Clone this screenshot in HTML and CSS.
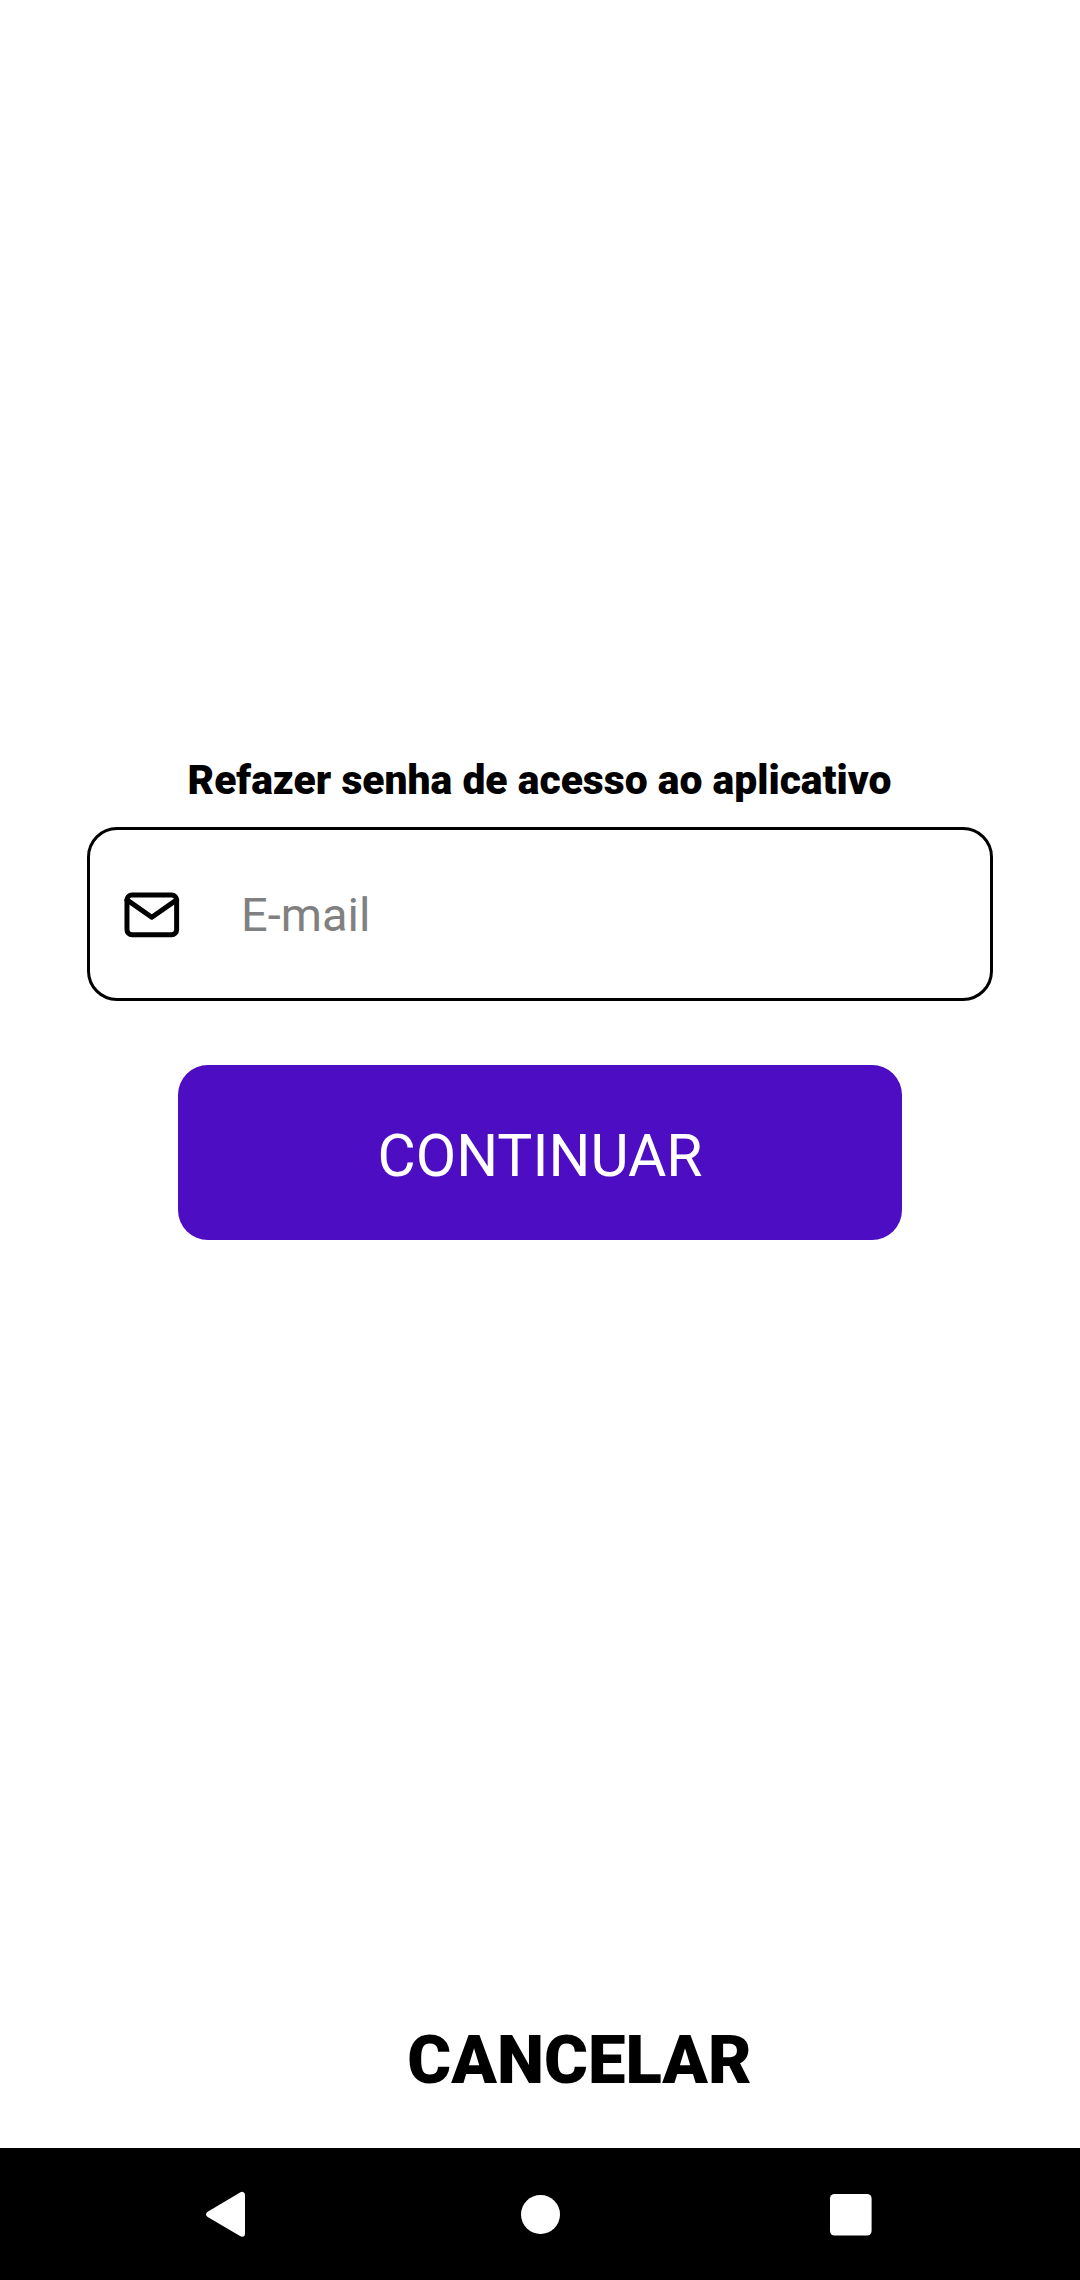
FILE: index.html
```html
<!DOCTYPE html>
<html lang="pt-BR">
<head>
<meta charset="utf-8">
<title>Refazer senha</title>
<link rel="stylesheet" href="styles.css">
</head>
<body>
<main class="screen">
  <h1 class="title">Refazer senha de acesso ao aplicativo</h1>
  <label class="field">
    <svg class="mail" viewBox="0 0 24 24"><path d="M4 4h16c1.100 0 2 .9 2 2v12c0 1.100-.9 2-2 2H4c-1.100 0-2-.9-2-2V6c0-1.100.9-2 2-2z"/><path d="M22 6l-10 7L2 6"/></svg>
    <input class="input" type="email" placeholder="E-mail">
  </label>
  <button class="primary">CONTINUAR</button>
  <button class="cancel">CANCELAR</button>
</main>
<nav class="navbar">
  <svg class="nav-icon" viewBox="0 0 48 48"><path class="back" d="M4.200 24.300L37 4.900V43.700z"/></svg>
  <svg class="nav-icon" viewBox="0 0 48 48"><circle cx="24.500" cy="24.500" r="19.500"/></svg>
  <svg class="nav-icon" viewBox="0 0 48 48"><rect x="3" y="4" width="41.600" height="41.600" rx="4.500"/></svg>
</nav>
</body>
</html>
```
FILE: styles.css
```css
* { box-sizing: border-box; }
body { margin: 0; width: 1080px; height: 2280px; display: flex; flex-direction: column; background: #fff; font-family: Roboto, sans-serif; color: #000; }
.screen { height: 2148px; display: flex; flex-direction: column; align-items: center; padding-top: 755px; }
.title { margin: 0; padding-right: 1px; font-size: 40.8px; line-height: 50px; font-weight: 900; white-space: nowrap; }
.field { width: 906px; height: 174px; margin-top: 22px; border: 3px solid #000; border-radius: 30px; display: flex; align-items: center; padding: 1px 0 0 32px; }
.mail { width: 59.6px; height: 59.6px; flex: none; fill: none; stroke: #000; stroke-width: 2; stroke-linecap: round; stroke-linejoin: round; }
.input { margin-left: 59.4px; padding: 0; border: 0; outline: 0; background: none; font: 47px Roboto, sans-serif; width: 660px; }
.input::placeholder { color: #808080; opacity: 1; }
.primary { width: 724px; height: 175px; margin-top: 64px; padding: 6px 0 0; border: 0; border-radius: 30px; background: #4d0dc3; color: #fff; font: 58.8px Roboto, sans-serif; }
.cancel { margin: 780px 0 0 79px; padding: 0; border: 0; background: none; color: #000; font: 900 67px/80px Roboto, sans-serif; }
.navbar { height: 132px; background: #000; display: flex; justify-content: space-between; align-items: center; padding: 0 205px; }
.nav-icon { width: 48px; height: 48px; fill: #fff; }
.back { stroke: #fff; stroke-width: 6; stroke-linejoin: round; }
```
